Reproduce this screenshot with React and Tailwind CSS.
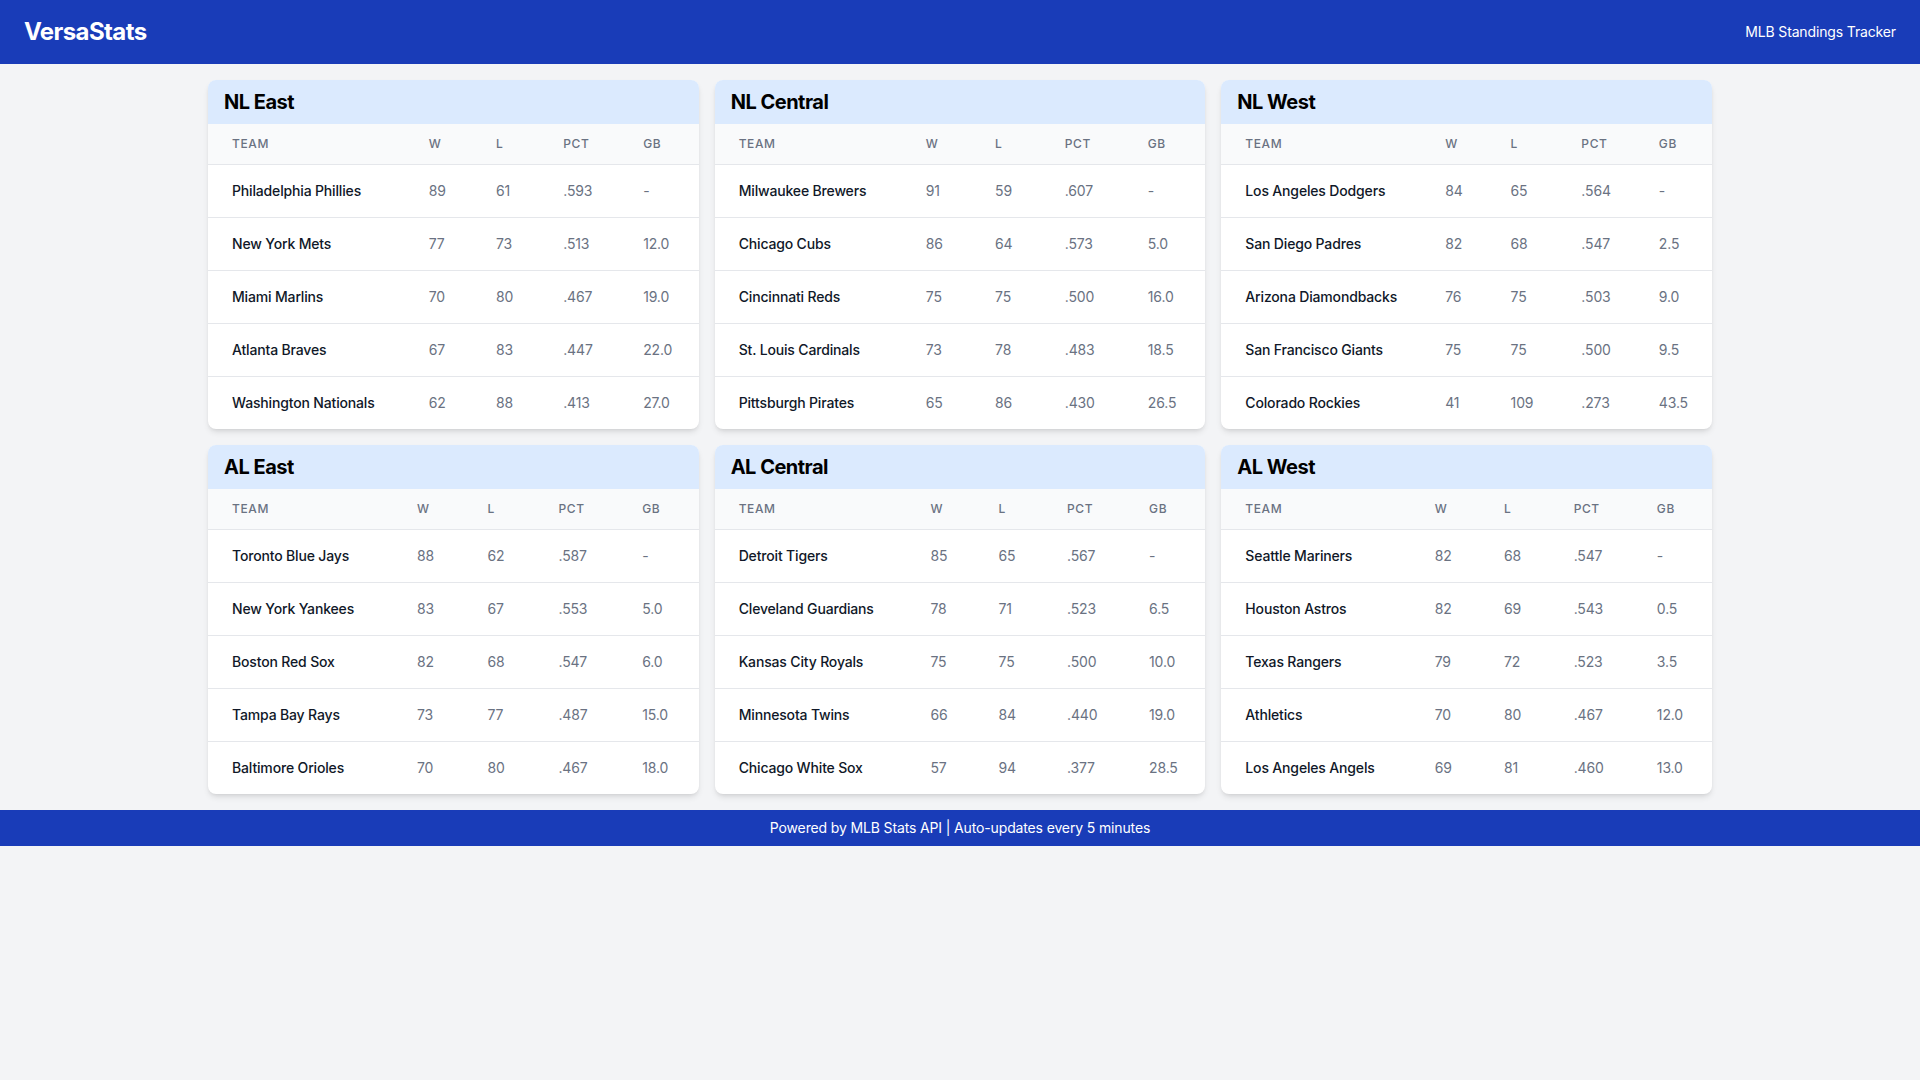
const divisions = [
  {
    name: 'NL East',
    teams: [
      ['Philadelphia Phillies', 89, 61, '.593', '-'],
      ['New York Mets', 77, 73, '.513', '12.0'],
      ['Miami Marlins', 70, 80, '.467', '19.0'],
      ['Atlanta Braves', 67, 83, '.447', '22.0'],
      ['Washington Nationals', 62, 88, '.413', '27.0'],
    ],
  },
  {
    name: 'NL Central',
    teams: [
      ['Milwaukee Brewers', 91, 59, '.607', '-'],
      ['Chicago Cubs', 86, 64, '.573', '5.0'],
      ['Cincinnati Reds', 75, 75, '.500', '16.0'],
      ['St. Louis Cardinals', 73, 78, '.483', '18.5'],
      ['Pittsburgh Pirates', 65, 86, '.430', '26.5'],
    ],
  },
  {
    name: 'NL West',
    teams: [
      ['Los Angeles Dodgers', 84, 65, '.564', '-'],
      ['San Diego Padres', 82, 68, '.547', '2.5'],
      ['Arizona Diamondbacks', 76, 75, '.503', '9.0'],
      ['San Francisco Giants', 75, 75, '.500', '9.5'],
      ['Colorado Rockies', 41, 109, '.273', '43.5'],
    ],
  },
  {
    name: 'AL East',
    teams: [
      ['Toronto Blue Jays', 88, 62, '.587', '-'],
      ['New York Yankees', 83, 67, '.553', '5.0'],
      ['Boston Red Sox', 82, 68, '.547', '6.0'],
      ['Tampa Bay Rays', 73, 77, '.487', '15.0'],
      ['Baltimore Orioles', 70, 80, '.467', '18.0'],
    ],
  },
  {
    name: 'AL Central',
    teams: [
      ['Detroit Tigers', 85, 65, '.567', '-'],
      ['Cleveland Guardians', 78, 71, '.523', '6.5'],
      ['Kansas City Royals', 75, 75, '.500', '10.0'],
      ['Minnesota Twins', 66, 84, '.440', '19.0'],
      ['Chicago White Sox', 57, 94, '.377', '28.5'],
    ],
  },
  {
    name: 'AL West',
    teams: [
      ['Seattle Mariners', 82, 68, '.547', '-'],
      ['Houston Astros', 82, 69, '.543', '0.5'],
      ['Texas Rangers', 79, 72, '.523', '3.5'],
      ['Athletics', 70, 80, '.467', '12.0'],
      ['Los Angeles Angels', 69, 81, '.460', '13.0'],
    ],
  },
];

const DivisionCard = ({ division }) => (
  <div className="bg-white rounded-lg shadow-md overflow-hidden">
    <div className="bg-blue-100 px-4 py-2">
      <h2 className="text-xl font-bold tracking-tight text-black">{division.name}</h2>
    </div>
    <table className="w-full">
      <thead className="bg-gray-50 border-b border-gray-200">
        <tr>
          {['Team', 'W', 'L', 'PCT', 'GB'].map((h) => (
            <th
              key={h}
              className="px-6 py-3 text-left text-xs font-medium text-gray-500 uppercase tracking-wider"
            >
              {h}
            </th>
          ))}
        </tr>
      </thead>
      <tbody className="divide-y divide-gray-200 tracking-[-0.01em]">
        {division.teams.map(([team, w, l, pct, gb]) => (
          <tr key={team}>
            <td className="px-6 py-4 whitespace-nowrap text-sm font-medium text-gray-900">{team}</td>
            <td className="px-6 py-4 whitespace-nowrap text-sm text-gray-500">{w}</td>
            <td className="px-6 py-4 whitespace-nowrap text-sm text-gray-500">{l}</td>
            <td className="px-6 py-4 whitespace-nowrap text-sm text-gray-500">{pct}</td>
            <td className="px-6 py-4 whitespace-nowrap text-sm text-gray-500">{gb}</td>
          </tr>
        ))}
      </tbody>
    </table>
  </div>
);

export default function App() {
  return (
    <div className="min-h-screen bg-gray-100 font-['Inter',sans-serif]">
      {/* Header */}
      <header className="bg-blue-800 text-white px-6 py-4 flex items-center justify-between">
        <h1 className="text-2xl font-bold tracking-tight">VersaStats</h1>
        <span className="text-sm tracking-[-0.01em]">MLB Standings Tracker</span>
      </header>

      <main className="max-w-[1536px] mx-auto px-4 py-4">
        <div className="grid grid-cols-3 gap-4">
          {divisions.map((d) => (
            <DivisionCard key={d.name} division={d} />
          ))}
        </div>
      </main>

      <footer className="bg-blue-800 text-white text-center py-2 text-sm tracking-[-0.01em]">
        Powered by MLB Stats API | Auto-updates every 5 minutes
      </footer>
    </div>
  );
}
